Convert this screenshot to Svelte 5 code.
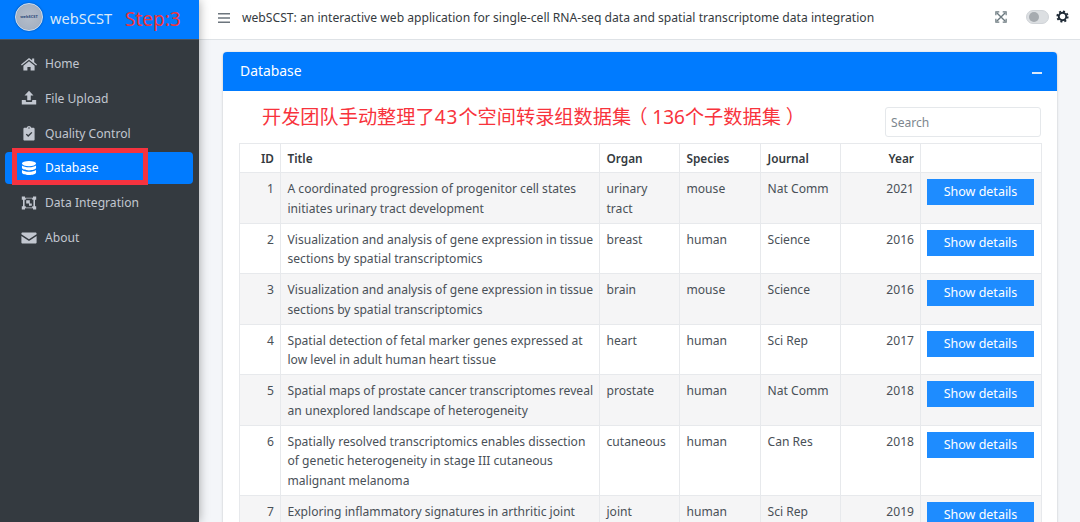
<script>
  const nav = [
    { label: "Home", icon: "home" },
    { label: "File Upload", icon: "upload" },
    { label: "Quality Control", icon: "check" },
    { label: "Database", icon: "db", active: true },
    { label: "Data Integration", icon: "integ" },
    { label: "About", icon: "mail" }
  ];

  const rows = [
    [1, "A coordinated progression of progenitor cell states initiates urinary tract development", "urinary tract", "mouse", "Nat Comm", 2021],
    [2, "Visualization and analysis of gene expression in tissue sections by spatial transcriptomics", "breast", "human", "Science", 2016],
    [3, "Visualization and analysis of gene expression in tissue sections by spatial transcriptomics", "brain", "mouse", "Science", 2016],
    [4, "Spatial detection of fetal marker genes expressed at low level in adult human heart tissue", "heart", "human", "Sci Rep", 2017],
    [5, "Spatial maps of prostate cancer transcriptomes reveal an unexplored landscape of heterogeneity", "prostate", "human", "Nat Comm", 2018],
    [6, "Spatially resolved transcriptomics enables dissection of genetic heterogeneity in stage III cutaneous malignant melanoma", "cutaneous", "human", "Can Res", 2018],
    [7, "Exploring inflammatory signatures in arthritic joint biopsies with Spatial Transcriptomics", "joint", "human", "Sci Rep", 2019]
  ];
</script>

<div class="page">
  <aside class="sidebar">
    <div class="brand">
      <div class="logo"><span>webSCST</span></div>
      <span class="brand-name">webSCST</span>
      <span class="step">Step:3</span>
    </div>
    <nav>
      {#each nav as item}
        <div class="nav-item" class:active={item.active}>
          <svg class="nav-icon" viewBox="0 0 20 20" fill="currentColor">
            {#if item.icon === "home"}
              <path d="M10 2.5 0 10.5l1 1.300L10 4.600l9 7.200 1-1.300-3.500-2.800V3.200h-2.600v2.200zM3 12.300V18h5v-4.200h4V18h5v-5.700L10 6.700z" />
            {:else if item.icon === "upload"}
              <path d="M10 1l5.600 5.800h-3.400v6H7.800v-6H4.400zM1 12.500h5v1.500c0 .6.500 1 1 1h6c.5 0 1-.4 1-1v-1.500h5V18H1z" />
            {:else if item.icon === "check"}
              <path fill-rule="evenodd" d="M4.500 3.500h2.600a3 3 0 0 1 5.800 0h2.600c.8 0 1.500.7 1.500 1.500v13c0 .8-.7 1.500-1.500 1.500h-11C3.700 19.500 3 18.800 3 18V5c0-.8.7-1.500 1.500-1.500zM10 2.800a.9.9 0 1 0 0 1.800.9.9 0 0 0 0-1.800zM6 12l3 3 5.200-5.200-1.200-1.200L9 12.600l-1.800-1.800z" />
            {:else if item.icon === "db"}
              <ellipse cx="10" cy="4.500" rx="8.800" ry="3.300" />
              <path d="M1.200 7v2.800c0 1.800 3.900 3.200 8.800 3.200s8.800-1.400 8.800-3.200V7c-1.900 1.500-5.300 2.200-8.800 2.200S3.100 8.500 1.200 7zM1.200 12.500v3c0 1.800 3.900 3.200 8.800 3.200s8.800-1.400 8.800-3.200v-3c-1.900 1.500-5.300 2.200-8.800 2.200s-6.900-.7-8.800-2.200z" />
            {:else if item.icon === "integ"}
              <path fill-rule="evenodd" d="M1 2h4v1.500h10V2h4v4h-1.500v8H19v4h-4v-1.500H5V18H1v-4h1.500V6H1zM4.500 6v8H6v1.500h8V14h1.500V6H14V4.500H6V6z" />
              <path d="M6.500 6.500h4.500v4H6.500zM10 10.500h3.500v3H10z" />
            {:else}
              <path d="M.5 4.500C.5 3.700 1.200 3 2 3h16c.8 0 1.500.7 1.500 1.500v.7L10 11.500.5 5.200zM.5 7.500v8c0 .8.7 1.500 1.500 1.500h16c.8 0 1.500-.7 1.500-1.500v-8L10 13.800z" />
            {/if}
          </svg>
          <span>{item.label}</span>
        </div>
      {/each}
    </nav>
    <div class="mark"></div>
  </aside>

  <div class="main">
    <header class="topbar">
      <svg class="burger" viewBox="0 0 12 10" fill="#6c757d"><path d="M0 0h12v1.600H0zM0 4.200h12v1.600H0zM0 8.400h12V10H0z" /></svg>
      <span class="app-title">webSCST: an interactive web application for single-cell RNA-seq data and spatial transcriptome data integration</span>
      <svg class="expand" viewBox="0 0 14 14" fill="none" stroke="#6c7a80" stroke-width="1.600">
        <path d="M2 2l10 10M12 2 2 12" />
        <path d="M1 5V1h4M9 1h4v4M13 9v4H9M5 13H1V9" stroke-width="1.400" />
      </svg>
      <div class="switch"><div class="knob"></div></div>
      <svg class="gear" viewBox="0 0 16 16">
        <circle cx="8" cy="8" r="4.600" fill="none" stroke="#1f2a36" stroke-width="2.400" />
        <circle cx="8" cy="8" r="6.400" fill="none" stroke="#1f2a36" stroke-width="2.200" stroke-dasharray="2.500 2.500" />
      </svg>
    </header>

    <div class="content">
      <section class="card">
        <div class="card-head">
          <span>Database</span>
          <span class="minus"></span>
        </div>
        <div class="card-body">
          <div class="toolbar">
            <div class="note">开发团队手动整理了<span class="digits wide">43</span>个空间转录组数据集<span class="paren open" lang="zh-TW">（</span><span class="digits">136</span>个子数据集<span class="paren close" lang="zh-TW">）</span></div>
            <div class="search">Search</div>
          </div>
          <table>
            <colgroup>
              <col style="width:41px" /><col style="width:319px" /><col style="width:80px" /><col style="width:81px" /><col style="width:80px" /><col style="width:80px" /><col style="width:121px" />
            </colgroup>
            <thead>
              <tr>
                <th class="num">ID</th><th>Title</th><th>Organ</th><th>Species</th><th>Journal</th><th class="num">Year</th><th></th>
              </tr>
            </thead>
            <tbody>
              {#each rows as r, i}
                <tr class:odd={i % 2 === 0}>
                  <td class="num">{r[0]}</td>
                  <td class="title">{r[1]}</td>
                  <td>{r[2]}</td>
                  <td>{r[3]}</td>
                  <td>{r[4]}</td>
                  <td class="num">{r[5]}</td>
                  <td class="action"><div class="btn">Show details</div></td>
                </tr>
              {/each}
            </tbody>
          </table>
        </div>
      </section>
    </div>
  </div>
</div>

<style>
  :global(body) {
    margin: 0;
    overflow: hidden;
  }
  .page {
    display: flex;
    width: 1080px;
    height: 522px;
    overflow: hidden;
    background: #f4f6f9;
    font-family: "Noto Sans", "Noto Sans CJK SC", sans-serif;
    font-size: 12.1px;
    color: #212529;
  }
  .sidebar {
    width: 199px;
    flex: none;
    background: #343a40;
    box-shadow: 0 0 10px rgba(0, 0, 0, 0.35);
    position: relative;
    z-index: 2;
  }
  .brand {
    height: 40px;
    background: #007bff;
    display: flex;
    align-items: center;
    padding-left: 15px;
    border-bottom: 1px solid #4b545c;
    box-sizing: border-box;
  }
  .logo {
    width: 28px;
    height: 28px;
    border-radius: 50%;
    background: radial-gradient(circle, #b4bdca 0%, #a7b2c2 65%, #7f93ad 85%, #c8d3e0 100%);
    border: 1px solid #d5dde8;
    box-sizing: border-box;
    box-shadow: 0 0 2px rgba(0, 0, 0, 0.4);
    display: flex;
    align-items: center;
    justify-content: center;
    margin-top: -6px;
  }
  .logo span {
    font-size: 4px;
    font-weight: 700;
    color: #2d4a7a;
  }
  .brand-name {
    color: #dbe9f8;
    font-size: 14.6px;
    margin-left: 7px;
    margin-top: -3px;
  }
  .step {
    color: #f0343c;
    font-size: 19px;
    margin-left: 13px;
    margin-top: -1px;
  }
  nav {
    padding: 7.6px 6px 0 5px;
  }
  .nav-item {
    display: flex;
    align-items: center;
    height: 32px;
    margin-bottom: 2.8px;
    padding-left: 16px;
    border-radius: 4px;
    color: #c2c7d0;
    font-size: 12.1px;
  }
  .nav-item.active {
    background: #007bff;
    color: #fff;
  }
  .nav-icon {
    width: 16px;
    height: 16px;
    margin-right: 8px;
  }
  .mark {
    position: absolute;
    left: 12px;
    top: 148px;
    width: 136px;
    height: 37px;
    border: 5px solid #f5333f;
    box-sizing: border-box;
  }
  .main {
    flex: 1;
    min-width: 0;
  }
  .topbar {
    height: 40px;
    background: #fff;
    border-bottom: 1px solid #dee2e6;
    box-sizing: border-box;
    display: flex;
    align-items: center;
    padding-left: 19px;
  }
  .burger {
    width: 12px;
    height: 10px;
    margin-top: -4px;
  }
  .app-title {
    margin-left: 12px;
    margin-top: -5px;
    font-size: 12.14px;
    color: #343a40;
    flex: 1;
    white-space: nowrap;
  }
  .expand {
    width: 12px;
    height: 12px;
    margin-right: 19px;
    margin-top: -6px;
  }
  .switch {
    width: 23px;
    height: 14px;
    border-radius: 7px;
    background: #dcdfe2;
    border: 1px solid #d0d4d8;
    box-sizing: border-box;
    display: flex;
    align-items: center;
    padding-left: 2px;
    margin-right: 7px;
    margin-top: -6px;
  }
  .knob {
    width: 10px;
    height: 10px;
    border-radius: 50%;
    background: #a6abb0;
  }
  .gear {
    width: 13px;
    height: 13px;
    margin-right: 11px;
    margin-top: -6px;
  }
  .content {
    padding: 12px 23px 0 24px;
  }
  .card {
    background: #fff;
    border-radius: 4px 4px 0 0;
    box-shadow: 0 0 1px rgba(0, 0, 0, 0.2), 0 1px 3px rgba(0, 0, 0, 0.15);
  }
  .card-head {
    height: 39px;
    background: #007bff;
    border-radius: 4px 4px 0 0;
    color: #fff;
    font-size: 13.9px;
    display: flex;
    align-items: center;
    justify-content: space-between;
    padding: 0 15px 0 17px;
  }
  .card-head span:first-child {
    margin-top: -2px;
  }
  .minus {
    width: 10px;
    height: 2px;
    background: #dbe9f8;
    margin-top: 3px;
  }
  .card-body {
    padding: 0 16px;
  }
  .toolbar {
    height: 52px;
    display: flex;
    justify-content: space-between;
    padding-left: 23px;
  }
  .note {
    color: #f8333c;
    font-size: 19.2px;
    line-height: 26px;
    margin-top: 12px;
    white-space: nowrap;
  }
  .digits {
    font-size: 19px;
  }
  .digits.wide {
    letter-spacing: 1px;
  }
  .paren {
    font-family: "Noto Sans CJK TC", sans-serif;
  }
  .paren.open {
    margin-left: -3px;
    margin-right: 5px;
  }
  .paren.close {
    margin-left: 5px;
  }
  .search {
    width: 156px;
    height: 30px;
    border: 1px solid #e5e8eb;
    border-radius: 3px;
    box-sizing: border-box;
    margin-top: 16px;
    padding-left: 5px;
    line-height: 30px;
    color: #7d868e;
    font-size: 12.1px;
  }
  table {
    width: 802px;
    border-collapse: collapse;
    table-layout: fixed;
  }
  th,
  td {
    border: 1px solid #e7e9ec;
    padding: 0 6.5px;
    vertical-align: top;
  }
  th {
    height: 28px;
    font-size: 11.8px;
    font-weight: 600;
    text-align: left;
    vertical-align: middle;
    color: #343a40;
  }
  td {
    padding-top: 6px;
    padding-bottom: 4.5px;
    line-height: 19.5px;
    color: #495057;
  }
  td.title {
    padding-right: 2px;
  }
  .num {
    text-align: right;
    padding-right: 6px;
  }
  .odd td {
    background: #f5f5f6;
  }
  td.action {
    padding: 6px 6px 0 6px;
  }
  .btn {
    height: 26px;
    line-height: 26px;
    background: #1e8cff;
    color: #fff;
    text-align: center;
    font-size: 12.5px;
    margin-right: 1px;
  }
</style>
